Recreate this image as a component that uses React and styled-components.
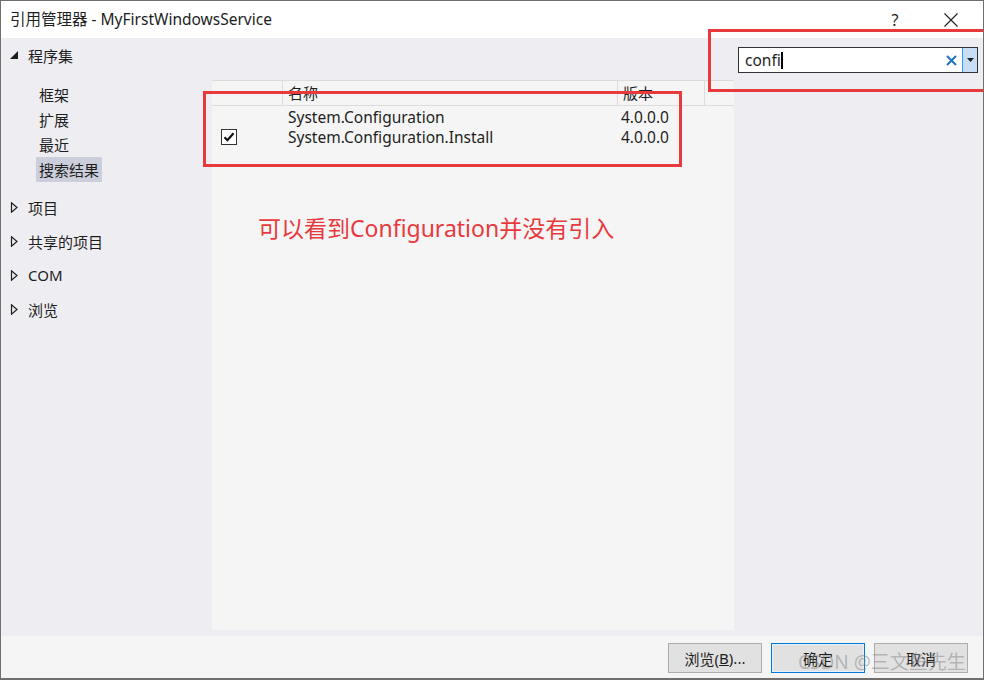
import React from "react";
import styled, { createGlobalStyle } from "styled-components";

const Global = createGlobalStyle`
  html, body { margin: 0; padding: 0; background: #ffffff; }
  body { font-family: "Noto Sans", "Noto Sans CJK SC", sans-serif; color: #1e1e1e; }
  * { box-sizing: border-box; }
`;

const Window = styled.div`
  position: relative;
  width: 984px;
  height: 680px;
  border: 1px solid #6f6f6f;
  border-bottom-width: 2px;
  display: flex;
  flex-direction: column;
  background: #f5f5f5;
  overflow: hidden;
`;

const TitleBar = styled.div`
  height: 37px;
  flex: none;
  background: #ffffff;
  display: flex;
  align-items: center;
  padding-left: 9px;
  padding-right: 4px;
  font-size: 15.5px;
  color: #1e1e1e;
`;

const TitleText = styled.div`
  flex: 1;
  margin-top: -2px;
`;

const TitleButton = styled.div`
  width: 56px;
  height: 37px;
  display: flex;
  align-items: center;
  justify-content: center;
  font-size: 16px;
  color: #1e1e1e;
`;

const Body = styled.div`
  flex: 1;
  display: flex;
  background: #eeeef2;
  min-height: 0;
`;

const Nav = styled.div`
  width: 211px;
  flex: none;
  padding-top: 0;
  font-size: 15px;
`;

const Group = styled.div`
  height: 34px;
  display: flex;
  align-items: center;
  padding-left: 9px;
  gap: 9px;
`;

const SubList = styled.div`
  display: flex;
  flex-direction: column;
  padding: 10px 0 8px 35px;
`;

const SubItem = styled.div`
  height: 25px;
  display: flex;
  align-items: center;
  align-self: flex-start;
  padding: 0 3px;
  background: ${(p) => (p.$active ? "#cccedb" : "transparent")};
`;

const Main = styled.div`
  width: 522px;
  flex: none;
  margin-top: 42px;
  margin-bottom: 6px;
  background: #f5f5f5;
  font-size: 15.5px;
  position: relative;
`;

const HeaderRow = styled.div`
  display: grid;
  grid-template-columns: 70px 335px 87px 1fr;
  height: 26px;
  border-top: 1px solid #dcdcdc;
  border-bottom: 1px solid #dcdcdc;
  color: #1e1e1e;
  font-size: 15px;
`;

const HeaderCell = styled.div`
  border-left: ${(p) => (p.$first ? "none" : "1px solid #dcdcdc")};
  padding-left: 5px;
  display: flex;
  align-items: center;
  line-height: 1;
`;

const Row = styled.div`
  display: grid;
  grid-template-columns: 70px 335px 87px 1fr;
  height: 20px;
  align-items: center;
`;

const Cell = styled.div`
  padding-left: ${(p) => p.$pl ?? 6}px;
  white-space: nowrap;
  display: flex;
  align-items: center;
`;

const Annotation = styled.div`
  position: absolute;
  left: 46px;
  top: 130px;
  font-family: "Noto Sans", "Noto Sans CJK SC", sans-serif;
  font-size: 23px;
  color: #e8393d;
  white-space: nowrap;
`;

const RightPane = styled.div`
  flex: 1;
  padding: 9px 5px 0 4px;
`;

const SearchBox = styled.div`
  height: 26px;
  display: flex;
  border: 1px solid #333337;
  background: #ffffff;
`;

const SearchInput = styled.div`
  flex: 1;
  display: flex;
  align-items: center;
  padding-left: 6px;
  font-size: 15.5px;
  color: #1e1e1e;
`;

const Caret = styled.span`
  display: inline-block;
  width: 2px;
  height: 17px;
  background: #000;
`;

const ClearBtn = styled.div`
  width: 22px;
  display: flex;
  align-items: center;
  justify-content: center;
`;

const DropBtn = styled.div`
  width: 15px;
  background: #c9def5;
  border-left: 1px solid #3399ff;
  display: flex;
  align-items: center;
  justify-content: center;
`;

const Footer = styled.div`
  height: 42px;
  flex: none;
  background: #f5f5f5;
  display: flex;
  justify-content: flex-end;
  align-items: flex-start;
  padding: 7px 15px 0 0;
  gap: 9px;
`;

const Button = styled.div`
  width: 94px;
  height: 30px;
  border: 1px solid ${(p) => (p.$default ? "#0078d7" : "#adadad")};
  background: #e1e1e1;
  box-shadow: ${(p) => (p.$default ? "inset 0 0 0 1px #e5f1fb" : "none")};
  display: flex;
  align-items: center;
  justify-content: center;
  font-size: 15px;
  color: #1e1e1e;
`;

const RedBox = styled.div`
  position: absolute;
  left: ${(p) => p.$x}px;
  top: ${(p) => p.$y}px;
  width: ${(p) => p.$w}px;
  height: ${(p) => p.$h}px;
  border: 3px solid #e8393d;
  pointer-events: none;
`;

const Watermark = styled.div`
  position: absolute;
  left: 797px;
  top: 646px;
  font-size: 19px;
  color: rgba(140, 140, 140, 0.55);
  white-space: nowrap;
  pointer-events: none;
`;

const ExpandedTri = () => (
  <svg width="9" height="9" viewBox="0 0 9 9">
    <polygon points="8,0 8,8 0,8" fill="#1e1e1e" />
  </svg>
);

const CollapsedTri = () => (
  <svg width="9" height="11" viewBox="0 0 9 11">
    <polygon points="1.5,0.8 1.5,10.2 7,5.5" fill="none" stroke="#1e1e1e" strokeWidth="1.2" />
  </svg>
);

const CheckBox = () => (
  <svg width="16" height="16" viewBox="0 0 16 16">
    <rect x="0.5" y="0.5" width="15" height="15" fill="#ffffff" stroke="#333333" />
    <path d="M3.5 8.2 L6.5 11.2 L12.5 4.2" fill="none" stroke="#111" strokeWidth="2.2" />
  </svg>
);

const CloseIcon = () => (
  <svg width="14" height="14" viewBox="0 0 14 14">
    <path d="M0.5 0.5 L13.5 13.5 M13.5 0.5 L0.5 13.5" stroke="#1e1e1e" strokeWidth="1.1" />
  </svg>
);

const BlueX = () => (
  <svg width="11" height="11" viewBox="0 0 11 11">
    <path d="M1 1 L10 10 M10 1 L1 10" stroke="#1e73c8" strokeWidth="2" />
  </svg>
);

const DownArrow = () => (
  <svg width="7" height="4" viewBox="0 0 7 4">
    <polygon points="0,0 7,0 3.5,4" fill="#1e1e1e" />
  </svg>
);

const rows = [
  { name: "System.Configuration", version: "4.0.0.0", checked: false },
  { name: "System.Configuration.Install", version: "4.0.0.0", checked: true },
];

export default function App() {
  return (
    <Window>
      <Global />
      <TitleBar>
        <TitleText>引用管理器 - MyFirstWindowsService</TitleText>
        <TitleButton>?</TitleButton>
        <TitleButton>
          <CloseIcon />
        </TitleButton>
      </TitleBar>
      <Body>
        <Nav>
          <Group>
            <ExpandedTri />
            <span>程序集</span>
          </Group>
          <SubList>
            <SubItem>框架</SubItem>
            <SubItem>扩展</SubItem>
            <SubItem>最近</SubItem>
            <SubItem $active>搜索结果</SubItem>
          </SubList>
          <Group>
            <CollapsedTri />
            <span>项目</span>
          </Group>
          <Group>
            <CollapsedTri />
            <span>共享的项目</span>
          </Group>
          <Group>
            <CollapsedTri />
            <span>COM</span>
          </Group>
          <Group>
            <CollapsedTri />
            <span>浏览</span>
          </Group>
        </Nav>
        <Main>
          <HeaderRow>
            <HeaderCell $first />
            <HeaderCell>名称</HeaderCell>
            <HeaderCell>版本</HeaderCell>
            <HeaderCell />
          </HeaderRow>
          {rows.map((r) => (
            <Row key={r.name}>
              <Cell $pl={9}>{r.checked ? <CheckBox /> : null}</Cell>
              <Cell>{r.name}</Cell>
              <Cell $pl={4}>{r.version}</Cell>
              <Cell />
            </Row>
          ))}
          <Annotation>可以看到Configuration并没有引入</Annotation>
        </Main>
        <RightPane>
          <SearchBox>
            <SearchInput>
              confi
              <Caret />
            </SearchInput>
            <ClearBtn>
              <BlueX />
            </ClearBtn>
            <DropBtn>
              <DownArrow />
            </DropBtn>
          </SearchBox>
        </RightPane>
      </Body>
      <Footer>
        <Button>
          浏览(<u>B</u>)...
        </Button>
        <Button $default>确定</Button>
        <Button>取消</Button>
      </Footer>
      <RedBox $x={202} $y={90} $w={479} $h={76} />
      <RedBox $x={707} $y={28} $w={290} $h={63} />
      <Watermark>CSDN @三文鱼先生</Watermark>
    </Window>
  );
}
